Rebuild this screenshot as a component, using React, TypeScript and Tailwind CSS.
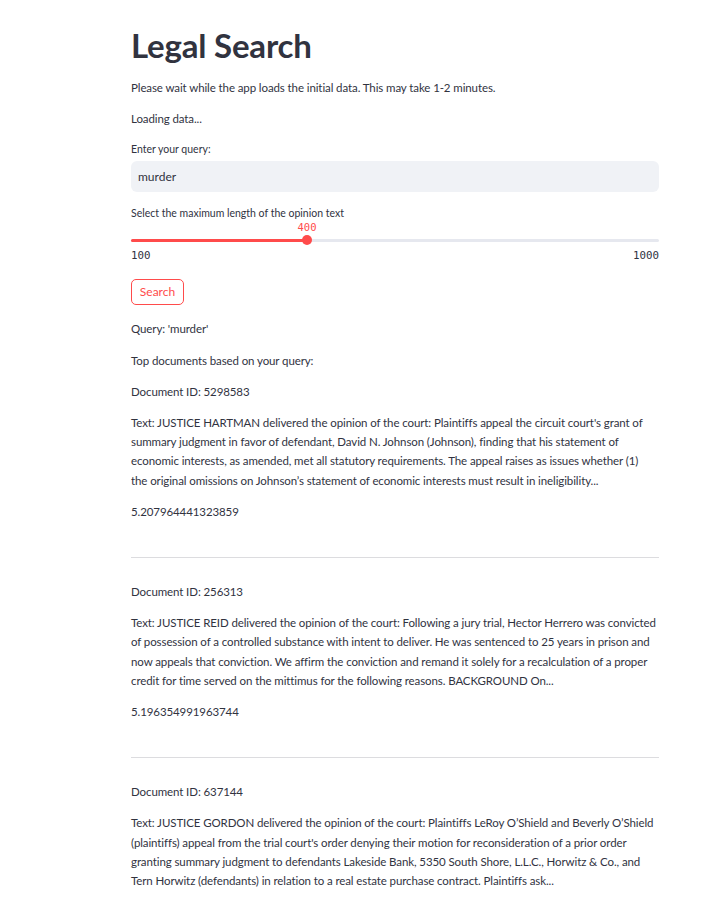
import React from "react";

const docs = [
  {
    id: "5298583",
    lines: [
      "Text: JUSTICE HARTMAN delivered the opinion of the court: Plaintiffs appeal the circuit court's grant of",
      "summary judgment in favor of defendant, David N. Johnson (Johnson), finding that his statement of",
      "economic interests, as amended, met all statutory requirements. The appeal raises as issues whether (1)",
      "the original omissions on Johnson\u2019s statement of economic interests must result in ineligibility...",
    ],
    score: "5.207964441323859",
  },
  {
    id: "256313",
    lines: [
      "Text: JUSTICE REID delivered the opinion of the court: Following a jury trial, Hector Herrero was convicted",
      "of possession of a controlled substance with intent to deliver. He was sentenced to 25 years in prison and",
      "now appeals that conviction. We affirm the conviction and remand it solely for a recalculation of a proper",
      "credit for time served on the mittimus for the following reasons. BACKGROUND On...",
    ],
    score: "5.196354991963744",
  },
  {
    id: "637144",
    lines: [
      "Text: JUSTICE GORDON delivered the opinion of the court: Plaintiffs LeRoy O\u2019Shield and Beverly O\u2019Shield",
      "(plaintiffs) appeal from the trial court's order denying their motion for reconsideration of a prior order",
      "granting summary judgment to defendants Lakeside Bank, 5350 South Shore, L.L.C., Horwitz & Co., and",
      "Tern Horwitz (defendants) in relation to a real estate purchase contract. Plaintiffs ask...",
    ],
    score: "5.180921387725143",
  },
];

const P = ({ children }: { children: React.ReactNode }) => (
  <p className="text-[11.5px] leading-[19.2px] tracking-[-0.1px] whitespace-nowrap">{children}</p>
);

export default function App() {
  return (
    <div
      className="min-h-screen bg-white text-[#31333f]"
      style={{ fontFamily: "Lato, 'Noto Sans', sans-serif" }}
    >
      <div className="ml-[131px] w-[528px] pt-[26px] pb-10 flex flex-col gap-3">
        <h1 className="text-[33px] leading-[38px] font-bold tracking-[-0.2px]">Legal Search</h1>
        <div className="mt-[2px]">
          <P>Please wait while the app loads the initial data. This may take 1-2 minutes.</P>
        </div>
        <P>Loading data...</P>
        <div className="flex flex-col">
          <label className="text-[10.5px] leading-[18px] mb-[3px]">Enter your query:</label>
          <div className="h-[31px] rounded-[6px] bg-[#f0f2f6] flex items-center px-[7px] text-[12px]">murder</div>
        </div>
        <div className="flex flex-col pb-[4px]">
          <label className="text-[10.5px] leading-[18px]">Select the maximum length of the opinion text</label>
          <div className="relative h-[11px]">
            <span
              className="absolute top-0 left-[33.333%] -translate-x-1/2 text-[10.5px] leading-[11px] text-[#ff4b4b]"
              style={{ fontFamily: "'DejaVu Sans Mono', monospace" }}
            >
              400
            </span>
          </div>
          <div className="relative h-[14px] flex items-center">
            <div className="h-[3px] w-full rounded-full bg-[#e6e8ef]" />
            <div className="absolute left-0 h-[3px] w-[33.333%] rounded-full bg-[#ff4b4b]" />
            <div className="absolute left-[33.333%] -translate-x-1/2 h-[10px] w-[10px] rounded-full bg-[#ff4b4b]" />
          </div>
          <div
            className="mt-[2px] -mb-[1px] flex justify-between text-[10.8px] leading-[14px] text-[#31333f]"
            style={{ fontFamily: "'DejaVu Sans Mono', monospace" }}
          >
            <span>100</span>
            <span>1000</span>
          </div>
        </div>
        <div className="mb-[2px]">
          <button className="h-[26px] w-[53px] rounded-[5px] border border-[#ff4b4b] text-[12px] text-[#ff4b4b] bg-white">
            Search
          </button>
        </div>
        <P>Query: 'murder'</P>
        <P>Top documents based on your query:</P>
        {docs.map((d, i) => (
          <React.Fragment key={d.id}>
            {i > 0 && (
              <div className="pt-[24px] pb-[12px]">
                <hr className="border-0 h-px bg-[#dcdcdf]" />
              </div>
            )}
            <P>Document ID: {d.id}</P>
            <P>
              {d.lines.map((l, j) => (
                <React.Fragment key={j}>
                  {l}
                  {j < d.lines.length - 1 && <br />}
                </React.Fragment>
              ))}
            </P>
            <P>{d.score}</P>
          </React.Fragment>
        ))}
      </div>
    </div>
  );
}
